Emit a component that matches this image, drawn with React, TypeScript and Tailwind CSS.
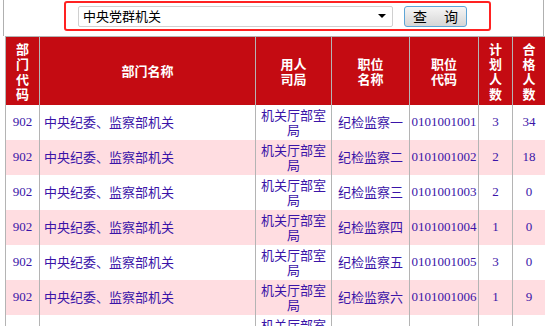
import { ReactNode } from "react";

const rows = [
  { job: "纪检监察一", code: "0101001001", plan: 3, pass: 34 },
  { job: "纪检监察二", code: "0101001002", plan: 2, pass: 18 },
  { job: "纪检监察三", code: "0101001003", plan: 2, pass: 0 },
  { job: "纪检监察四", code: "0101001004", plan: 1, pass: 0 },
  { job: "纪检监察五", code: "0101001005", plan: 3, pass: 0 },
  { job: "纪检监察六", code: "0101001006", plan: 1, pass: 9 },
  { job: "纪检监察七", code: "0101001007", plan: 1, pass: 2 },
];

const HeadCell = ({ children, w }: { children: ReactNode; w: string }) => (
  <th className={`${w} border-x border-[#b4b4b4] px-0 text-center align-middle font-bold text-white leading-[15px]`}>
    {children}
  </th>
);

const App = () => {
  return (
    <div
      className="h-[326px] w-[545px] overflow-hidden bg-white text-[13px]"
      style={{ fontFamily: '"Liberation Serif", "Noto Sans CJK SC", serif' }}
    >
      {/* search bar */}
      <div className="ml-[3px] mr-[1px] h-[36px] border-x border-[#b0b0b0] pt-[1px]">
        <div className="ml-[60px] flex h-[30px] w-[427px] items-center rounded-[3px] border-2 border-[#ff2222]">
          <div
            className="ml-[12px] flex h-[21px] w-[315px] items-center justify-between rounded-[2px] border border-[#d0d0d0] bg-white pl-[4px] pr-[6px] text-black"
            style={{ fontFamily: '"Noto Sans CJK SC", sans-serif' }}
          >
            <span>中央党群机关</span>
            <span className="h-0 w-0 border-x-[4px] border-t-[4px] border-x-transparent border-t-black" />
          </div>
          <button
            className="ml-[11px] flex h-[21px] w-[63px] items-center justify-center gap-[17px] rounded-[3px] border border-[#5ea5d6] bg-gradient-to-b from-[#f6f6f6] to-[#d6d6d6] text-[14px] text-black"
            style={{ fontFamily: '"Noto Sans CJK SC", sans-serif' }}
          >
            <span>查</span>
            <span>询</span>
          </button>
        </div>
      </div>

      {/* result table */}
      <table className="ml-[5px] w-[540px] table-fixed border-collapse border-t border-[#b4b4b4]">
        <thead>
          <tr
            className="h-[68px] bg-[#c40b12]"
            style={{ fontFamily: '"Noto Sans CJK SC", sans-serif' }}
          >
            <HeadCell w="w-[34px]">部<br />门<br />代<br />码</HeadCell>
            <HeadCell w="w-[216px]">部门名称</HeadCell>
            <HeadCell w="w-[76px]">用人<br />司局</HeadCell>
            <HeadCell w="w-[78px]">职位<br />名称</HeadCell>
            <HeadCell w="w-[69px]">职位<br />代码</HeadCell>
            <HeadCell w="w-[34px]">计<br />划<br />人<br />数</HeadCell>
            <HeadCell w="w-[33px]">合<br />格<br />人<br />数</HeadCell>
          </tr>
        </thead>
        <tbody className="text-[#3a14a8]">
          {rows.map((r, i) => (
            <tr key={r.code} className={`h-[35px] ${i % 2 ? "bg-[#ffdde1]" : "bg-white"}`}>
              <td className="border-x border-[#b4b4b4] text-center">902</td>
              <td
                className="border-x border-[#b4b4b4] pl-[4px]"
                style={{ fontFamily: '"Noto Sans CJK SC", sans-serif' }}
              >
                中央纪委、监察部机关
              </td>
              <td
                className="border-x border-[#b4b4b4] px-[2px] text-center leading-[15px]"
                style={{ fontFamily: '"Noto Sans CJK SC", sans-serif' }}
              >
                机关厅部室<br />局
              </td>
              <td
                className="border-x border-[#b4b4b4] text-center"
                style={{ fontFamily: '"Noto Sans CJK SC", sans-serif' }}
              >
                {r.job}
              </td>
              <td className="border-x border-[#b4b4b4] text-center">{r.code}</td>
              <td className="border-x border-[#b4b4b4] text-center">{r.plan}</td>
              <td className="border-x border-[#b4b4b4] text-center">{r.pass}</td>
            </tr>
          ))}
        </tbody>
      </table>
    </div>
  );
};

export default App;
